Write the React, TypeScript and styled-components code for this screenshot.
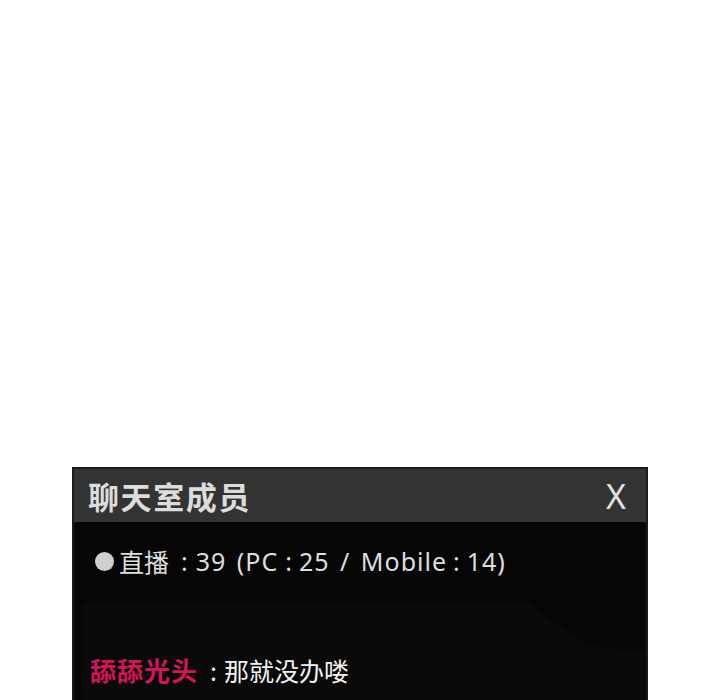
import React from "react";
import styled, { createGlobalStyle } from "styled-components";

const Global = createGlobalStyle`
  html, body { margin: 0; padding: 0; background: #ffffff; }
  body { font-family: "Noto Sans", "Noto Sans CJK SC", sans-serif; }
`;

const Page = styled.div`
  width: 720px;
  height: 700px;
  overflow: hidden;
  padding: 467px 0 0 72px;
  box-sizing: border-box;
`;

const Panel = styled.div`
  width: 576px;
  height: 260px;
  box-sizing: border-box;
  border: 2px solid #1a1a1a;
  border-bottom: none;
  background: #060606;
  display: flex;
  flex-direction: column;
`;

const Header = styled.div`
  height: 53px;
  background: #333333;
  display: flex;
  align-items: center;
  justify-content: space-between;
  padding: 0 20px 0 14px;
  flex-shrink: 0;
`;

const Title = styled.div`
  font-family: "Noto Sans CJK SC", sans-serif;
  font-weight: 700;
  font-size: 31px;
  line-height: 40px;
  color: #dcdcdc;
  letter-spacing: 1.6px;
`;

const Close = styled.div`
  font-family: "Noto Sans", sans-serif;
  font-size: 34px;
  line-height: 40px;
  color: #e0e0e0;
`;

const Body = styled.div`
  flex: 1;
  display: flex;
  flex-direction: column;
`;

const InfoLine = styled.div`
  height: 81px;
  box-sizing: border-box;
  display: flex;
  align-items: center;
  padding: 0 0 4px 21px;
  font-family: "Noto Sans", "Noto Sans CJK SC", sans-serif;
  font-size: 25px;
  color: #dedede;
  white-space: pre;
  letter-spacing: 1px;
  word-spacing: 3px;
`;

const Dot = styled.span`
  display: inline-block;
  width: 19px;
  height: 19px;
  border-radius: 50%;
  background: #cfcfcf;
  margin: 2px 5px 0 0;
`;

const Label = styled.span`
  letter-spacing: 0;
`;

const Colon = styled.span<{ $l: number; $r: number }>`
  margin: 0 ${(p) => p.$r}px 0 ${(p) => p.$l}px;
  letter-spacing: 0;
`;

const Shade = styled.div`
  flex: 1;
  margin-left: 10px;
  background: #0a0a0a;
  clip-path: polygon(0 0, 79% 0, 83% 14%, 90% 34%, 100% 40%, 100% 100%, 0 100%);
  display: flex;
  flex-direction: column;
  padding-top: 49px;
`;

const ChatLine = styled.div`
  display: flex;
  align-items: center;
  font-family: "Noto Sans CJK SC", sans-serif;
  font-size: 25px;
  line-height: 36px;
  padding-left: 6px;
`;

const Name = styled.span`
  color: #d3145a;
  font-weight: 700;
  font-size: 26px;
  letter-spacing: 1px;
  margin-right: 12px;
`;

const Message = styled.span`
  color: #f2f2f2;
`;

export default function App() {
  return (
    <>
      <Global />
      <Page>
        <Panel>
          <Header>
            <Title>聊天室成员</Title>
            <Close>X</Close>
          </Header>
          <Body>
            <InfoLine>
              <Dot />
              <Label>直播</Label>
              <Colon $l={12} $r={8}>:</Colon>
              {"39 (PC"}
              <Colon $l={7} $r={7}>:</Colon>
              {"25 / Mobile"}
              <Colon $l={6} $r={7}>:</Colon>
              {"14)"}
            </InfoLine>
            <Shade>
              <ChatLine>
                <Name>舔舔光头</Name>
                <Message>
                  <Colon $l={0} $r={7}>:</Colon>
                  那就没办喽
                </Message>
              </ChatLine>
            </Shade>
          </Body>
        </Panel>
      </Page>
    </>
  );
}
